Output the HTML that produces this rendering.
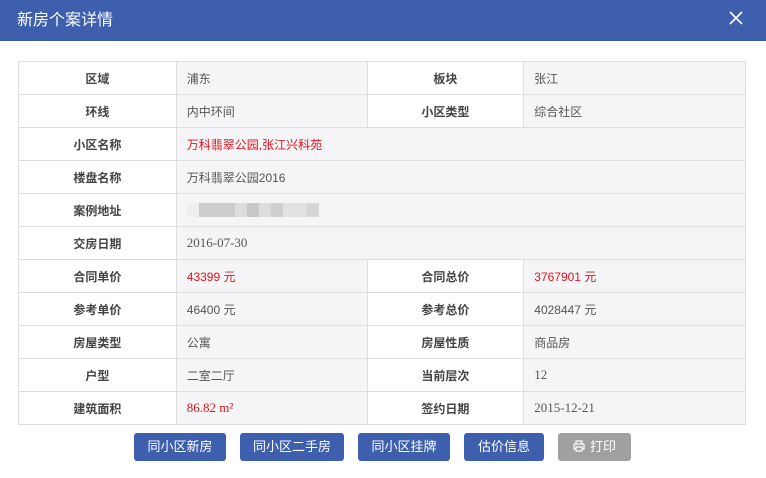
<!DOCTYPE html>
<html><head><meta charset="utf-8"><style>
*{margin:0;padding:0;box-sizing:border-box}
body{width:766px;height:478px;background:#fff;font-family:"Liberation Sans","Noto Sans CJK SC",sans-serif;position:relative;overflow:hidden}
.hd{position:absolute;left:0;top:0;width:766px;height:41px;background:#3d5fae;color:#fff;font-size:16px;line-height:41px;padding-left:17px}
.x{position:absolute;left:728px;top:10px}
table{position:absolute;left:18px;top:61px;width:728px;border-collapse:collapse;font-size:12px}
td{height:33px;border:1px solid #dedde0;padding:0 10px;color:#555}
td.l{text-align:center;font-weight:bold;color:#444;background:#fff}
td.v{background:#f5f4f7}
.r{color:#e0141b}
.s{font-family:"Liberation Serif","Noto Serif CJK SC",serif;font-size:13px}
.bl{display:inline-block;height:14px;vertical-align:middle}
.btn{position:absolute;top:433px;height:28px;border-radius:3px;background:#3d5fae;color:#fff;font-size:13px;line-height:28px;text-align:center}
</style></head><body>
<div class="hd">新房个案详情</div>
<svg class="x" width="16" height="16" viewBox="0 0 16 16"><path d="M2 2L14 14M14 2L2 14" stroke="#fff" stroke-width="1.6"/></svg>
<table>
<colgroup><col style="width:158px"><col style="width:191px"><col style="width:157px"><col style="width:222px"></colgroup>
<tr><td class="l">区域</td><td class="v">浦东</td><td class="l">板块</td><td class="v">张江</td></tr>
<tr><td class="l">环线</td><td class="v">内中环间</td><td class="l">小区类型</td><td class="v">综合社区</td></tr>
<tr><td class="l">小区名称</td><td class="v r" colspan="3">万科翡翠公园,张江兴科苑</td></tr>
<tr><td class="l">楼盘名称</td><td class="v" colspan="3">万科翡翠公园2016</td></tr>
<tr><td class="l">案例地址</td><td class="v" colspan="3"><span class="bl" style="width:12px;background:#eee"></span><span class="bl" style="width:36px;background:#ccc"></span><span class="bl" style="width:12px;background:#ddd"></span><span class="bl" style="width:12px;background:#c8c8c8"></span><span class="bl" style="width:12px;background:#ddd"></span><span class="bl" style="width:12px;background:#cfcfcf"></span><span class="bl" style="width:24px;background:#e2e2e2"></span><span class="bl" style="width:12px;background:#d6d6d6"></span></td></tr>
<tr><td class="l">交房日期</td><td class="v s" colspan="3">2016-07-30</td></tr>
<tr><td class="l">合同单价</td><td class="v r">43399 元</td><td class="l">合同总价</td><td class="v r">3767901 元</td></tr>
<tr><td class="l">参考单价</td><td class="v">46400 元</td><td class="l">参考总价</td><td class="v">4028447 元</td></tr>
<tr><td class="l">房屋类型</td><td class="v">公寓</td><td class="l">房屋性质</td><td class="v">商品房</td></tr>
<tr><td class="l">户型</td><td class="v">二室二厅</td><td class="l">当前层次</td><td class="v s">12</td></tr>
<tr><td class="l">建筑面积</td><td class="v r s">86.82 m²</td><td class="l">签约日期</td><td class="v s">2015-12-21</td></tr>
</table>
<div class="btn" style="left:134px;width:92px">同小区新房</div>
<div class="btn" style="left:240px;width:104px">同小区二手房</div>
<div class="btn" style="left:358px;width:92px">同小区挂牌</div>
<div class="btn" style="left:464px;width:80px">估价信息</div>
<div class="btn" style="left:558px;width:73px;background:#a0a0a2"><svg width="12" height="12" viewBox="0 0 12 12" style="vertical-align:-1px;margin-right:5px"><path d="M3 4V1h6v3M2 4h8a1 1 0 0 1 1 1v4H9M3 9H1V5a1 1 0 0 1 1-1M3 7h6v4H3z" fill="none" stroke="#fff" stroke-width="1.2"/></svg>打印</div>
</body></html>
